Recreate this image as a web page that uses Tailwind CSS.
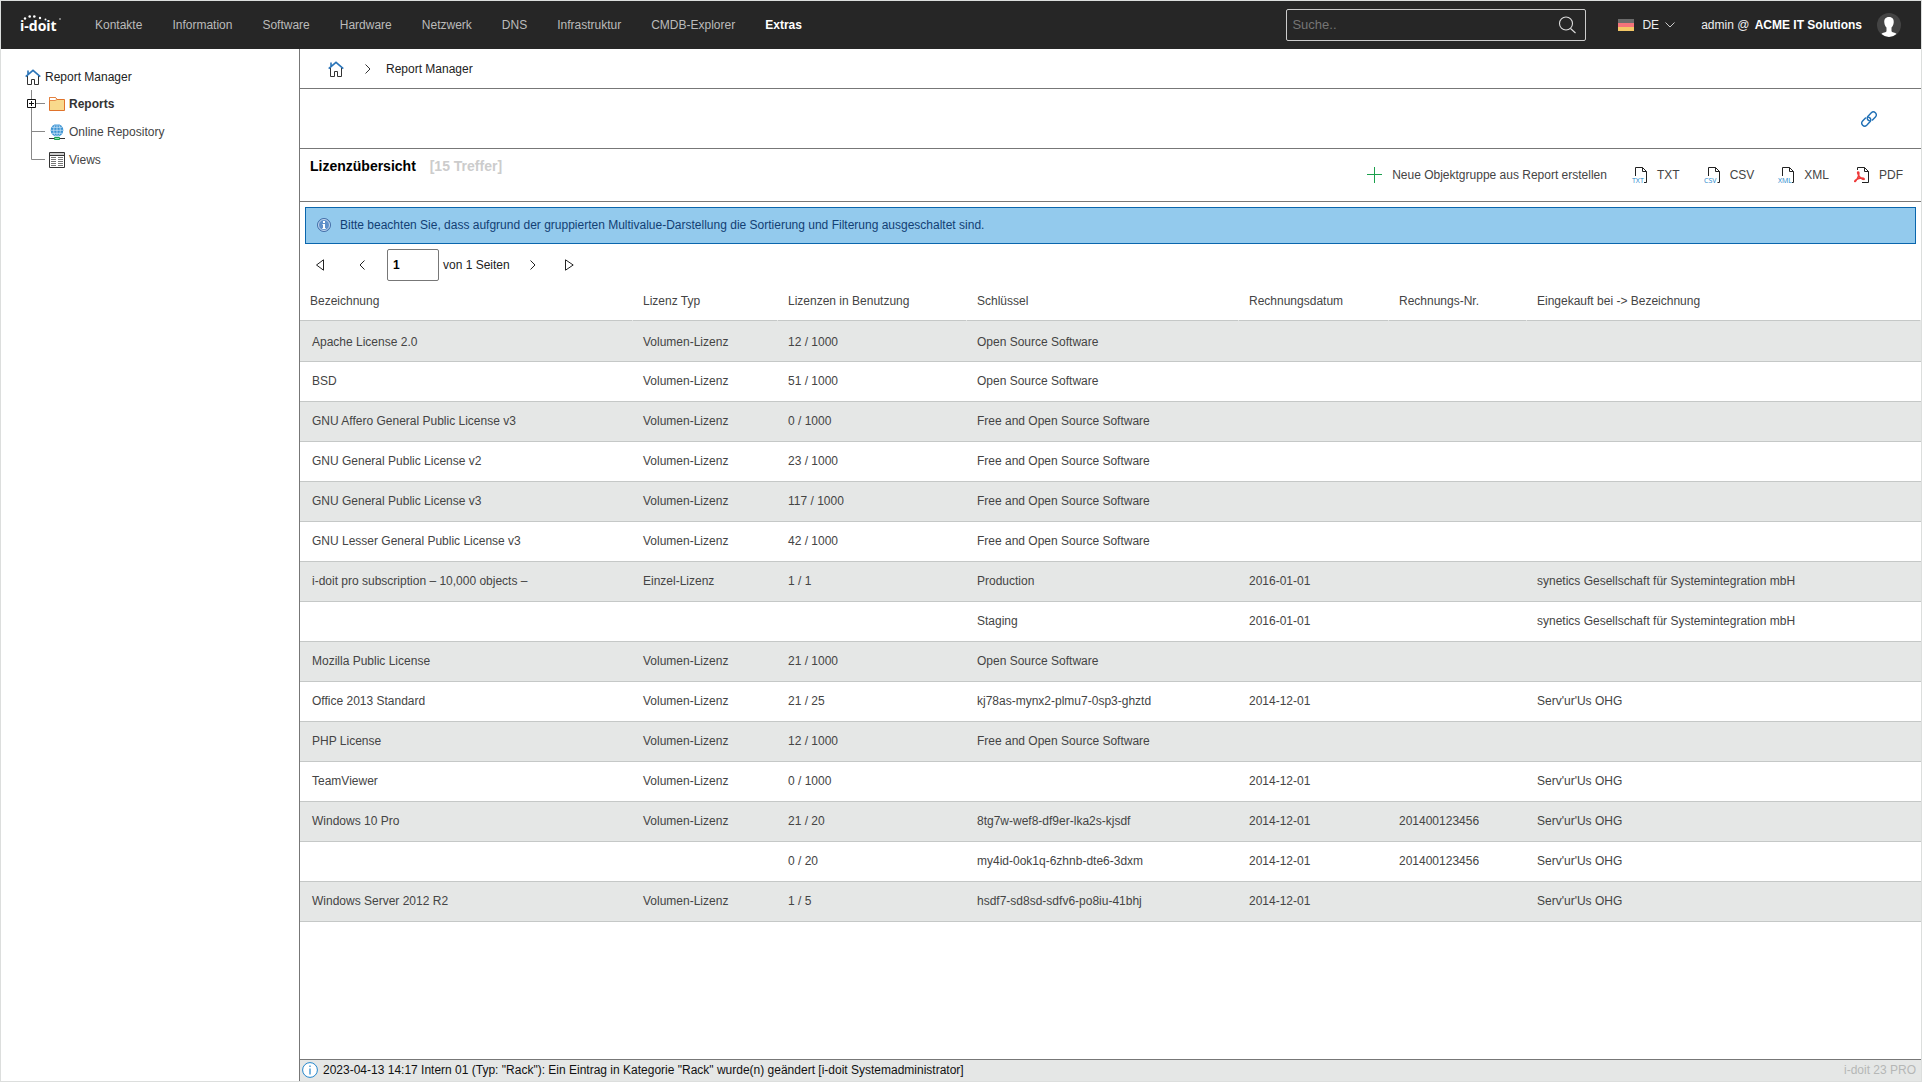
<!DOCTYPE html>
<html lang="de">
<head>
  <meta charset="UTF-8">
  <title>i-doit - Report Manager</title>
  <script src="https://cdn.jsdelivr.net/npm/@tailwindcss/browser@4"></script>
</head>
<body class="min-h-screen flex flex-col border border-[#dcdedd] bg-white font-['Liberation_Sans',Arial,sans-serif] text-[12px] leading-4 text-[#444]">

  <!-- Kopfzeile -->
  <header class="h-12 shrink-0 bg-[#262626] flex items-center text-[#bbb]">
    <a href="#" class="ml-[19px] w-[42px]" aria-label="i-doit">
      <svg class="w-[42px] h-[20px]" viewBox="0 0 42 20" fill="#fff">
        <text x="0" y="16" font-family="Open Sans, sans-serif" font-size="14" font-weight="700">i-doit</text>
        <circle cx="5" cy="3.500" r="1.200"/><circle cx="9.700" cy="1.500" r="1.300"/><circle cx="14.300" cy="1.500" r="1.300"/>
        <circle cx="20" cy="3" r="1.200"/><circle cx="25.500" cy="4.500" r="1"/><circle cx="40" cy="4" r="1" fill="#999"/>
      </svg>
    </a>
    <nav class="flex gap-[30px] ml-[33px]">
      <a href="#">Kontakte</a>
      <a href="#">Information</a>
      <a href="#">Software</a>
      <a href="#">Hardware</a>
      <a href="#">Netzwerk</a>
      <a href="#">DNS</a>
      <a href="#">Infrastruktur</a>
      <a href="#">CMDB-Explorer</a>
      <a href="#" class="font-bold text-white">Extras</a>
    </nav>
    <form class="ml-auto w-[300px] h-8 border border-[#ccc] rounded-xs flex items-center pr-2">
      <input type="text" aria-label="Suche" placeholder="Suche.." class="flex-1 px-[5px] text-[13px] placeholder-[#757575] outline-none">
      <button type="button" aria-label="Suchen">
        <svg class="w-5 h-5" viewBox="0 0 20 20" fill="none" stroke="#ddd" stroke-width="1.100"><circle cx="9" cy="8.500" r="6.500"/><path d="M13.500 13.500l5 4.500"/></svg>
      </button>
    </form>
    <button type="button" class="ml-8 flex items-center text-[#eee]">
      <svg class="w-4 h-3 mr-2" viewBox="0 0 16 12"><path fill="#6b6b6b" d="M0 0h16v4H0z"/><path fill="#f4737a" d="M0 4h16v4H0z"/><path fill="#f3c766" d="M0 8h16v4H0z"/></svg>
      DE
      <svg class="w-[10px] h-[6px] ml-[6px]" viewBox="0 0 10 6" fill="none" stroke="#ccc"><path d="M.5.5L5 5l4.500-4.500"/></svg>
    </button>
    <a href="#" class="ml-[26px] mr-5 flex items-center text-[#eee]">
      admin @&nbsp;<b class="text-white ml-[2px]">ACME IT Solutions</b>
      <svg class="w-6 h-6 ml-[15px]" viewBox="0 0 24 24"><circle cx="12" cy="12" r="12" fill="#444"/><path fill="#fff" d="M12 4c-3.500 0-5 2.300-4.700 5.500.2 2.500 1.200 4 2.200 5v3.500c0 1.500-4 1.500-5 3A12 12 0 0 0 12 24a12 12 0 0 0 7.500-3c-1-1.500-5-1.500-5-3v-3.500c1-1 2-2.500 2.200-5C17 6.300 15.500 4 12 4z"/></svg>
    </a>
  </header>

  <div class="flex-1 flex">

    <!-- Navigationsbaum -->
    <aside class="w-[299px] shrink-0 border-r border-[#777] pt-[15px] pl-6">
      <a href="#" class="h-[26px] flex items-center gap-1 text-[#222]">
        <svg class="w-4 h-4" viewBox="0 0 16 16" fill="none"><path stroke="#333" d="M2.500 7v8.500h4v-5h3v5h4V7"/><path stroke="#2a74b8" stroke-width="1.600" d="M.7 7.700L8 1.300l7.300 6.400M3 5V1.500"/></svg>
        Report Manager
      </a>
      <ul>
        <li class="h-7 flex items-center">
          <svg class="w-6 h-7" viewBox="0 0 24 28" fill="none"><path stroke="#888" d="M6.500 0v28M11 13.500h9"/><path fill="#fff" stroke="#111" d="M2.500 9.500h8v8h-8zM4 13.500h5M6.500 11v5"/></svg>
          <svg class="w-4 h-4 mr-1" viewBox="0 0 16 16" fill="#f8d98c" stroke="#e0732b"><path d="M.5 14.500v-13h6l1.500 2h7.500v11z"/><path fill="#fff" d="M.5 4.500v-3h6l1.500 2-2 1z" stroke-width=".8"/></svg>
          <a href="#" class="font-bold text-[#333]">Reports</a>
        </li>
        <li class="h-7 flex items-center">
          <svg class="w-6 h-7" viewBox="0 0 24 28" fill="none"><path stroke="#888" d="M6.500 0v28M6.500 13.500H20"/></svg>
          <svg class="w-4 h-4 mr-1" viewBox="0 0 16 16" fill="none"><circle cx="8" cy="6.300" r="6.300" fill="#3b93d3"/><path stroke="#d4eafa" stroke-width=".7" d="M2 6.300h12M3 3.300h10M3 9.300h10M8 0v12.500"/><ellipse cx="8" cy="6.300" rx="3.300" ry="6.300" stroke="#d4eafa" stroke-width=".7"/><path stroke="#333" d="M0 14.500h16"/><path fill="#8fe0ad" stroke="#1ba04d" d="M5.500 13.500h5v2h-5z"/></svg>
          <a href="#">Online Repository</a>
        </li>
        <li class="h-7 flex items-center">
          <svg class="w-6 h-7" viewBox="0 0 24 28" fill="none"><path stroke="#888" d="M6.500 0v13.500H20"/></svg>
          <svg class="w-4 h-4 mr-1" viewBox="0 0 16 16" fill="none"><path fill="#ccc" d="M1 1h14v3H1z"/><path stroke="#333" d="M.5.5h15v15H.5zM.5 3.500h15"/><path stroke="#777" d="M2 5.500h5M2 7.500h5M2 9.500h5M2 11.500h5M2 13.500h5M9 5.500h5M9 7.500h5M9 9.500h5M9 11.500h5M9 13.500h5"/></svg>
          <a href="#">Views</a>
        </li>
      </ul>
    </aside>

    <div class="flex-1 min-w-0 flex flex-col">
      <div class="h-10 border-b border-[#777] flex items-center pl-7 text-[#222]">
        <a href="#" aria-label="Start">
          <svg class="w-4 h-4" viewBox="0 0 16 16" fill="none"><path stroke="#333" d="M2.500 7v8.500h4v-5h3v5h4V7"/><path stroke="#2a74b8" stroke-width="1.600" d="M.7 7.700L8 1.300l7.300 6.400M3 5V1.500"/></svg>
        </a>
        <svg class="w-[6px] h-[10px] ml-[21px] mr-[15px]" viewBox="0 0 6 10" fill="none" stroke="#333"><path d="M.5.5L5 5 .5 9.500"/></svg>
        <a href="#">Report Manager</a>
      </div>

      <div class="h-15 border-b border-[#777] flex items-center justify-end pr-11">
        <a href="#" aria-label="Link">
          <svg class="w-4 h-4" viewBox="0 0 16 16" fill="none" stroke="#1f6fb5" stroke-width="1.400" stroke-linecap="round"><path d="M8.300 9.800a2.700 2.700 0 0 1-1.500-4.300L10.300 1.800a2.900 2.900 0 0 1 4.100 4.100L11.500 9"/><path d="M7.700 6.200a2.700 2.700 0 0 1 1.500 4.300L5.700 14.200a2.900 2.900 0 0 1-4.100-4.100L4.500 7"/></svg>
        </a>
      </div>

      <div class="h-[53px] border-b border-[#777] flex pl-[10px] pr-[18px]">
        <h1 class="mt-[9px] text-[14px] font-bold text-black">Lizenzübersicht <span class="ml-[10px] text-[#ccc]">[15 Treffer]</span></h1>
        <div class="ml-auto flex items-center gap-[25px]">
          <button type="button" class="flex items-center gap-[9px]">
            <svg class="w-4 h-4" viewBox="0 0 16 16" stroke="#1ba04d"><path d="M7.500 0v16M0 7.500h15"/></svg>
            Neue Objektgruppe aus Report erstellen
          </button>
          <button type="button" class="flex items-center gap-[9px]">
            <svg class="w-4 h-4 overflow-visible" viewBox="0 0 16 16" fill="none"><path stroke="#222" d="M3.500 9V.5h7l4 4v11H12M10.500.5v4h4"/><text x="0" y="16" font-family="Open Sans, sans-serif" font-size="7" fill="#2487cc">TXT</text></svg>
            TXT
          </button>
          <button type="button" class="flex items-center gap-[9px]">
            <svg class="w-4 h-4 overflow-visible" viewBox="0 0 16 16" fill="none"><path stroke="#222" d="M3.500 9V.5h7l4 4v11H12.500M10.500.5v4h4"/><text x="-1" y="16" font-family="Open Sans, sans-serif" font-size="7" fill="#2487cc">CSV</text></svg>
            CSV
          </button>
          <button type="button" class="flex items-center gap-[9px]">
            <svg class="w-4 h-4 overflow-visible" viewBox="0 0 16 16" fill="none"><path stroke="#222" d="M3.500 9V.5h7l4 4v11H13M10.500.5v4h4"/><text x="-1" y="16" font-family="Open Sans, sans-serif" font-size="7" fill="#2487cc">XML</text></svg>
            XML
          </button>
          <button type="button" class="flex items-center gap-[9px]">
            <svg class="w-4 h-4" viewBox="0 0 16 16" fill="none"><path stroke="#222" d="M3.500 3V.5h7l4 4v11H8M10.500.5v4h4"/><path stroke="#ee3a3a" stroke-width="1.500" stroke-linejoin="round" d="M4 5c1.300-.5 1 2.500.3 4.500S1.500 15 .8 14.500 3 11.500 6 11.200s4.500.3 4.200 1S6.500 11.500 5 9 3.300 5.300 4 5z"/></svg>
            PDF
          </button>
        </div>
      </div>

      <div class="h-[37px] mt-[5px] mx-[5px] border border-[#0a66ad] bg-[#93caed] flex items-center pl-[11px] pb-px text-[#123f74]">
        <svg class="w-[14px] h-[14px] mr-[9px]" viewBox="0 0 14 14"><circle cx="7" cy="7" r="6.500" fill="#5f8fc9" stroke="#456fa8"/><circle cx="7" cy="7" r="5.500" fill="none" stroke="#d5e4f5" stroke-width=".8"/><path fill="#fff" d="M6 3h2v2H6zM5.500 6H8v4h.7v1H5.300v-1H6V7h-.5z"/></svg>
        Bitte beachten Sie, dass aufgrund der gruppierten Multivalue-Darstellung die Sortierung und Filterung ausgeschaltet sind.
      </div>

      <div class="h-8 mt-[5px] flex items-center pl-4 text-[#222]">
        <button type="button" aria-label="Erste Seite"><svg class="w-[9px] h-3" viewBox="0 0 9 12" fill="none" stroke="#222"><path d="M7.500.8v10.400L.5 6z"/></svg></button>
        <button type="button" aria-label="Vorherige Seite" class="ml-[34px]"><svg class="w-[6px] h-[10px]" viewBox="0 0 6 10" fill="none" stroke="#222"><path d="M5.500.5L1 5l4.500 4.500"/></svg></button>
        <input type="text" id="seite" value="1" class="w-13 h-8 ml-[22px] mr-1 border border-[#777] rounded-xs px-[5px] font-bold text-black">
        <label for="seite">von 1 Seiten</label>
        <button type="button" aria-label="Nächste Seite" class="ml-5"><svg class="w-[6px] h-[10px]" viewBox="0 0 6 10" fill="none" stroke="#222"><path d="M.5.5L5 5 .5 9.500"/></svg></button>
        <button type="button" aria-label="Letzte Seite" class="ml-[29px]"><svg class="w-[9px] h-3" viewBox="0 0 9 12" fill="none" stroke="#222"><path d="M.5.8v10.400L8.200 6z"/></svg></button>
      </div>

      <table class="w-full table-fixed text-left border-separate border-spacing-0">
        <colgroup>
          <col class="w-[333px]"><col class="w-[145px]"><col class="w-[189px]"><col class="w-[272px]"><col class="w-[150px]"><col class="w-[138px]"><col>
        </colgroup>
        <thead>
          <tr class="h-10 *:pl-[10px] *:font-normal *:border-b *:border-b-[#c5c8c7] *:border-r *:border-r-white">
            <th>Bezeichnung</th><th>Lizenz Typ</th><th>Lizenzen in Benutzung</th><th>Schlüssel</th><th>Rechnungsdatum</th><th>Rechnungs-Nr.</th><th>Eingekauft bei -&gt; Bezeichnung</th>
          </tr>
        </thead>
        <tbody id="liste"></tbody>
      </table>

      <footer class="mt-auto h-[22px] border-t border-[#777] bg-[#e5e7e6] flex items-center pl-[2px] pr-[5px] pb-px text-[#111]">
        <svg class="w-4 h-4 mr-[5px]" viewBox="0 0 16 16" fill="none"><circle cx="8" cy="8" r="7.400" fill="#fff" stroke="#2487cc"/><path stroke="#2487cc" stroke-width="1.200" d="M8 3.500v1.500M8 6.500v6"/></svg>
        2023-04-13 14:17 Intern 01 (Typ: "Rack"): Ein Eintrag in Kategorie "Rack" wurde(n) geändert [i-doit Systemadministrator]
        <span class="ml-auto text-[#b5b7b6]">i-doit 23 PRO</span>
      </footer>
    </div>
  </div>

  <script>
    const zeilen = [
      ["Apache License 2.0", "Volumen-Lizenz", "12 / 1000", "Open Source Software", "", "", ""],
      ["BSD", "Volumen-Lizenz", "51 / 1000", "Open Source Software", "", "", ""],
      ["GNU Affero General Public License v3", "Volumen-Lizenz", "0 / 1000", "Free and Open Source Software", "", "", ""],
      ["GNU General Public License v2", "Volumen-Lizenz", "23 / 1000", "Free and Open Source Software", "", "", ""],
      ["GNU General Public License v3", "Volumen-Lizenz", "117 / 1000", "Free and Open Source Software", "", "", ""],
      ["GNU Lesser General Public License v3", "Volumen-Lizenz", "42 / 1000", "Free and Open Source Software", "", "", ""],
      ["i-doit pro subscription – 10,000 objects –", "Einzel-Lizenz", "1 / 1", "Production", "2016-01-01", "", "synetics Gesellschaft für Systemintegration mbH"],
      ["", "", "", "Staging", "2016-01-01", "", "synetics Gesellschaft für Systemintegration mbH"],
      ["Mozilla Public License", "Volumen-Lizenz", "21 / 1000", "Open Source Software", "", "", ""],
      ["Office 2013 Standard", "Volumen-Lizenz", "21 / 25", "kj78as-mynx2-plmu7-0sp3-ghztd", "2014-12-01", "", "Serv'ur'Us OHG"],
      ["PHP License", "Volumen-Lizenz", "12 / 1000", "Free and Open Source Software", "", "", ""],
      ["TeamViewer", "Volumen-Lizenz", "0 / 1000", "", "2014-12-01", "", "Serv'ur'Us OHG"],
      ["Windows 10 Pro", "Volumen-Lizenz", "21 / 20", "8tg7w-wef8-df9er-lka2s-kjsdf", "2014-12-01", "201400123456", "Serv'ur'Us OHG"],
      ["", "", "0 / 20", "my4id-0ok1q-6zhnb-dte6-3dxm", "2014-12-01", "201400123456", "Serv'ur'Us OHG"],
      ["Windows Server 2012 R2", "Volumen-Lizenz", "1 / 5", "hsdf7-sd8sd-sdfv6-po8iu-41bhj", "2014-12-01", "", "Serv'ur'Us OHG"]
    ];

    document.getElementById("liste").innerHTML = zeilen.map(z =>
      `<tr class="h-10 first:h-[41px] odd:bg-[#e5e7e6] *:pl-[10px] *:pb-px first:*:pt-[3px] *:first:pl-3 *:border-b *:border-[#c5c8c7]">${z.map(w => `<td>${w}</td>`).join("")}</tr>`
    ).join("");
  </script>
</body>
</html>
